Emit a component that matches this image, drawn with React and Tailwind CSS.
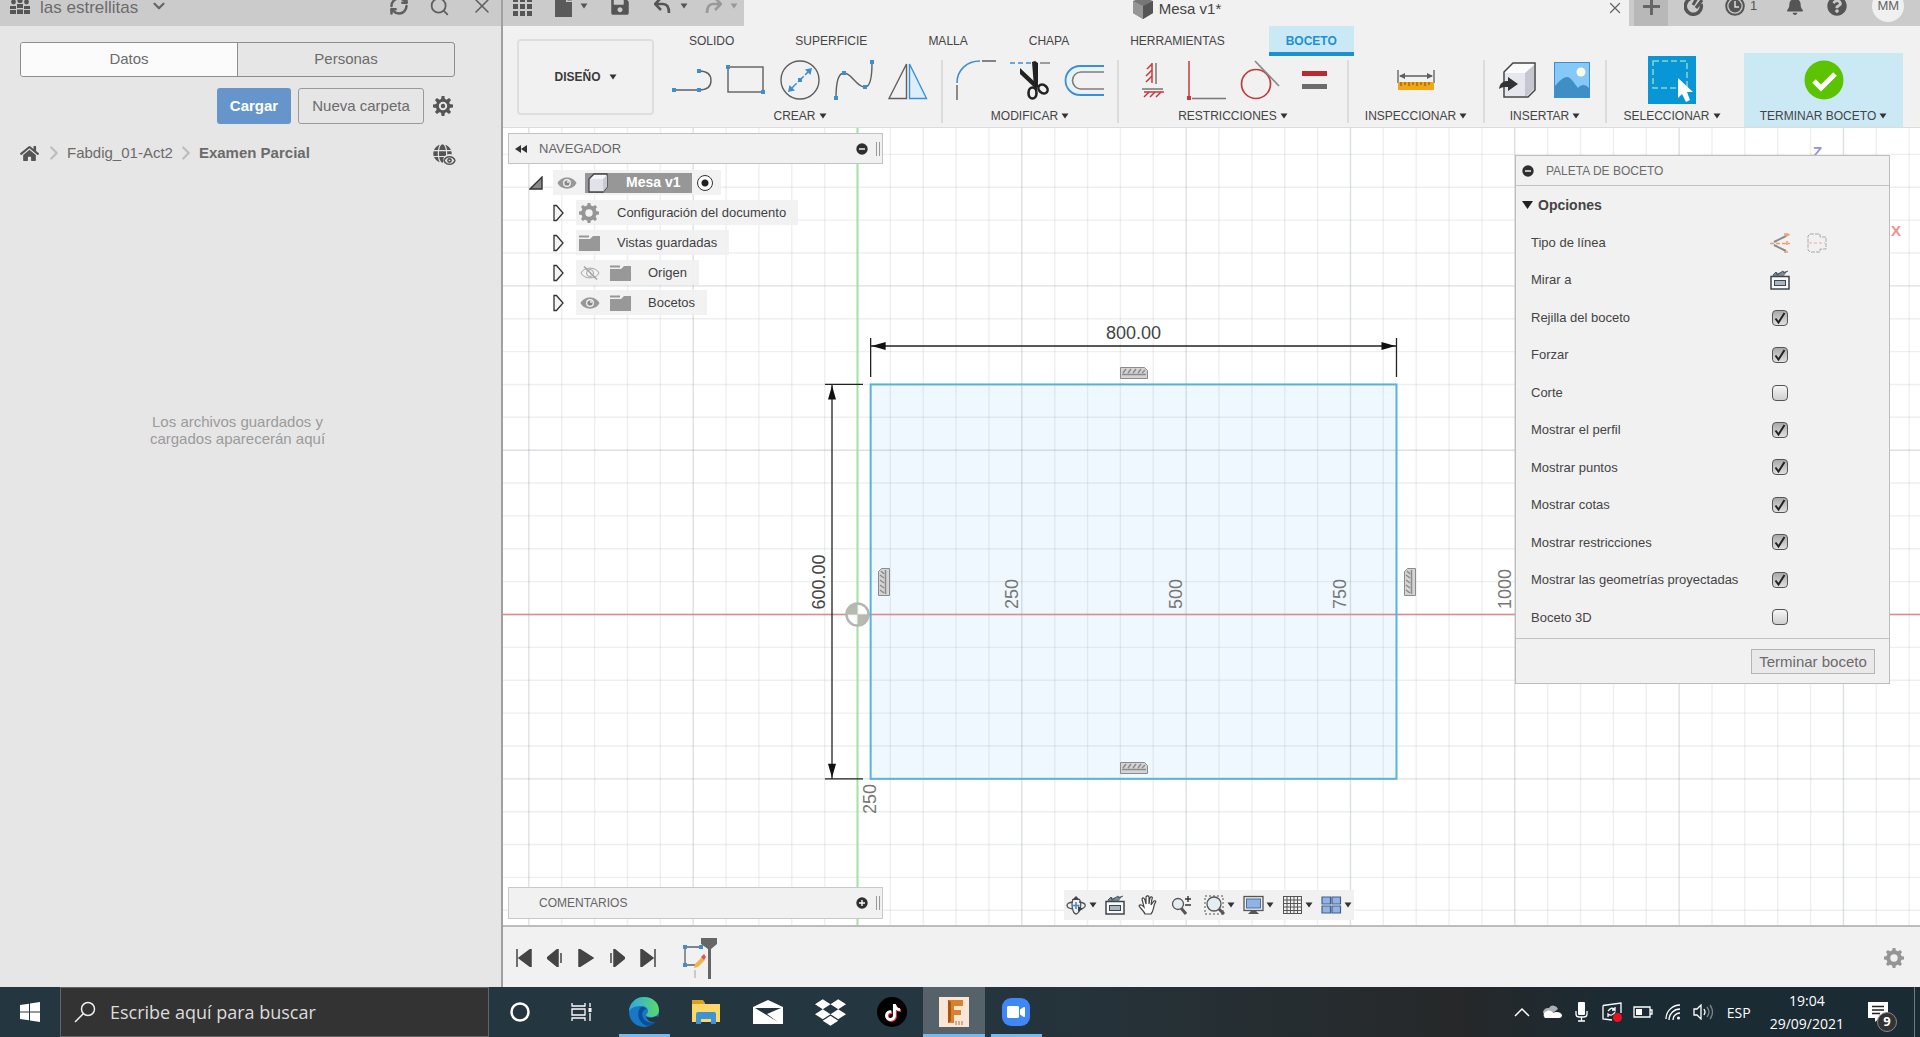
import { useState } from 'react';
import {
  FaHome,
  FaGlobe,
  FaSave,
  FaBell,
  FaQuestionCircle,
  FaDropbox,
  FaTiktok,
  FaVideo,
} from 'react-icons/fa';
import { RefreshCw, Search, X, ChevronDown, ChevronRight, Eye } from 'lucide-react';

const BLUE = '#3d8fd1';
const INK = '#5f5f5f';
const RED = '#c8373b';

// ---------- small shared pieces ----------

function Svg({ w, h, children, ...rest }) {
  return (
    <svg width={w} height={h} viewBox={`0 0 ${w} ${h}`} fill="none" aria-hidden="true" {...rest}>
      {children}
    </svg>
  );
}

function Caret({ color = '#333' }) {
  return (
    <Svg w={8} h={6} className="shrink-0">
      <path d="M0.5 0.5h7L4 5.5z" fill={color} />
    </Svg>
  );
}

function Dots({ points }) {
  return points.map(([x, y]) => (
    <rect key={`${x}-${y}`} x={x - 2} y={y - 2} width="4" height="4" fill={BLUE} />
  ));
}

function FilledEye() {
  return (
    <Svg w={20} h={14}>
      <path d="M0.5 7C4-0.5 16-0.5 19.5 7 16 14.5 4 14.5 0.5 7z" fill="#989898" />
      <circle cx="10" cy="7" r="4" fill="#eee" />
      <circle cx="10" cy="7" r="2.6" fill="#888" />
      <circle cx="11" cy="6" r="1" fill="#eee" />
    </Svg>
  );
}

function HiddenEye() {
  return (
    <Svg w={20} h={14} stroke="#a5a5a5">
      <path d="M1 7C4 0.5 16 0.5 19 7 16 13.5 4 13.5 1 7z" />
      <circle cx="10" cy="7" r="3.5" />
      <path d="M4 0.5l13 13" strokeWidth="1.6" />
    </Svg>
  );
}

function Gear({ color = '#959595', dot }) {
  const teeth = [0, 45, 90, 135, 180, 225, 270, 315];
  return (
    <Svg w={20} h={20}>
      <circle cx="10" cy="10" r="5.7" stroke={color} strokeWidth={dot ? 3 : 4} />
      {teeth.map((a) => (
        <path key={a} d="M8 4l0.600-4h2.800l0.600 4z" fill={color} transform={`rotate(${a} 10 10)`} />
      ))}
      {dot && <circle cx="10" cy="10" r="2.2" fill={color} />}
    </Svg>
  );
}

function Folder() {
  return (
    <Svg w={21} h={16}>
      <path d="M0 4h11l3-3h7v15H0z" fill="#989898" />
      <path d="M0 1.5h10" stroke="#989898" strokeWidth="2" />
    </Svg>
  );
}

function Cube() {
  return (
    <Svg w={20} h={20}>
      <path d="M1 6l5-5h13v13l-4 5H1z" fill="#f6f6f8" stroke="#444" strokeWidth="1.3" />
      <path d="M15 6l4-4v12l-4 5z" fill="#c9cad2" />
      <path d="M2 6h13v12H2z" fill="#e2e3ea" />
    </Svg>
  );
}

function LookAt() {
  return (
    <Svg w={21} h={20}>
      <path d="M2 6l4-4 2 1 9-2-3 5z" fill="#7d8790" />
      <path d="M3 5l3-3 1 3 6-4 1 2 4-2" stroke="#44505a" />
      <rect x="1" y="6.5" width="18" height="12.5" fill="#fafafa" stroke="#3c464e" strokeWidth="1.5" />
      <rect x="4.5" y="10.5" width="11" height="5" fill="#a9b5c0" stroke="#3c464e" />
    </Svg>
  );
}

function RoundSign({ plus }) {
  return (
    <Svg w={12} h={12}>
      <circle cx="6" cy="6" r="5.7" fill="#2f2f2f" />
      <path d={plus ? 'M3 6h6M6 3v6' : 'M3 6h6'} stroke="#fff" strokeWidth="1.4" />
    </Svg>
  );
}

// ---------- left data panel ----------

function DataPanel() {
  const [tab, setTab] = useState('Datos');

  return (
    <aside className="w-[503px] shrink-0 border-r-2 border-[#a0a0a0] bg-[#e6e6e6] text-[#6b6b6b]">
      <div className="flex h-[26px] items-end overflow-hidden bg-[#cbcbcb]">
        <div className="flex h-10 w-full shrink-0 items-center pr-[7px] pl-[10px]">
          <Svg w={20} h={18}>
            <g fill="#555">
              <circle cx="3.5" cy="5" r="2.4" />
              <circle cx="10" cy="3.5" r="2.6" />
              <circle cx="16.5" cy="5" r="2.4" />
              <path d="M0 9h6v3H0zM7 7h6v4H7zM14 9h6v3h-6zM0 13h6v4H0zM7 12.500h6V17H7zM14 13h6v4h-6z" />
            </g>
          </Svg>
          <span className="mt-1 ml-[10px] text-[17px] leading-4">las estrellitas</span>
          <ChevronDown size={18} strokeWidth={3} className="ml-3 text-[#666]" />
          <div className="ml-auto flex items-center gap-5">
            <button aria-label="Actualizar"><RefreshCw size={20} strokeWidth={3} className="text-[#5e5e5e]" /></button>
            <button aria-label="Buscar"><Search size={21} strokeWidth={2} className="text-[#5e5e5e]" /></button>
            <button aria-label="Cerrar"><X size={24} strokeWidth={1.5} className="text-[#5e5e5e]" /></button>
          </div>
        </div>
      </div>

      <div className="pt-4 pr-[46px] pl-5">
        <div className="flex h-[35px] rounded-[3px] border border-[#8d8d8d] text-[15px]">
          {['Datos', 'Personas'].map((name) => (
            <button
              key={name}
              onClick={() => setTab(name)}
              className={tab === name ? 'flex-1 rounded-l-[2px] border-r border-[#8d8d8d] bg-[#fbfbfb]' : 'flex-1'}
            >
              {name}
            </button>
          ))}
        </div>

        <div className="mt-[11px] mr-[2px] flex items-center justify-end gap-[7px] text-[15px]">
          <button className="h-9 w-[74px] rounded-[3px] bg-[#6695cb] font-bold text-white">Cargar</button>
          <button className="h-9 w-[126px] rounded-[3px] border border-[#9a9a9a]">Nueva carpeta</button>
          <button aria-label="Configuración" className="ml-[2px]"><Gear color="#555" dot /></button>
        </div>

        <nav className="mt-[19px] mr-[3px] flex h-5 items-center text-[15px]">
          <a href="#inicio" aria-label="Inicio"><FaHome size={19} color="#555" /></a>
          <ChevronRight size={22} strokeWidth={2.5} className="ml-1 text-[#bdbdbd]" />
          <a href="#fabdig" className="ml-[2px]">Fabdig_01-Act2</a>
          <ChevronRight size={22} strokeWidth={2.5} className="ml-[2px] text-[#bdbdbd]" />
          <a href="#examen" className="ml-[2px] font-bold">Examen Parcial</a>
          <span className="relative ml-auto">
            <FaGlobe size={19} color="#555" />
            <Eye size={13} strokeWidth={3} className="absolute -right-1 -bottom-1 rounded-full bg-[#e6e6e6] text-[#555]" />
          </span>
        </nav>

        <p className="mx-auto mt-[250px] w-[180px] text-center text-[15px] leading-[17px] text-[#9b9b9b]">
          Los archivos guardados y cargados aparecerán aquí
        </p>
      </div>
    </aside>
  );
}

// ---------- title bar ----------

function TitleBar() {
  return (
    <header className="flex h-[26px] shrink-0 items-end overflow-hidden bg-[#cbcbcb] text-[#555]">
      <div className="flex h-10 w-[241px] shrink-0 items-center pl-[10px]">
        <Svg w={19} h={19}>
          {[0, 7, 14].map((y) => [0, 7, 14].map((x) => <rect key={`${x}-${y}`} x={x} y={y} width="5" height="5" fill="#555" />))}
        </Svg>
        <Svg w={17} h={21} className="ml-[23px]">
          <path d="M0 0h11v6h6v15H0z" fill="#5a5a5a" />
          <path d="M12.500 0l4.500 4.500h-4.500z" fill="#5a5a5a" />
        </Svg>
        <span className="ml-2"><Caret color="#555" /></span>
        <button aria-label="Guardar" className="ml-[22px]"><FaSave size={20} /></button>
        <Svg w={18} h={18} className="ml-6">
          <path d="M7 1L1 7l6 6M2 7h7q6 0 6 9" stroke="#555" strokeWidth="2.600" />
        </Svg>
        <span className="ml-2"><Caret color="#555" /></span>
        <Svg w={18} h={18} className="ml-4">
          <path d="M11 1l6 6-6 6M16 7H9q-6 0-6 9" stroke="#999" strokeWidth="2.600" />
        </Svg>
        <span className="ml-2"><Caret color="#999" /></span>
      </div>

      <div className="flex h-10 flex-1 items-center bg-[#f1f1f1] pr-[5px]">
        <div className="ml-1 flex flex-1 items-center justify-center gap-[6px] text-[15px] text-[#444]">
          <Svg w={20} h={22} className="mt-1">
            <path d="M10 0l10 4v12l-10 6L0 16V4z" fill="#777" />
            <path d="M0 4l10 5v13L0 16z" fill="#969696" />
            <path d="M10 9l10-5v12l-10 6z" fill="#555" />
          </Svg>
          <span className="mt-[6px] leading-4">Mesa v1*</span>
        </div>
        <button aria-label="Cerrar pestaña"><X size={18} strokeWidth={1.7} className="mt-1 text-[#666]" /></button>
      </div>

      <div className="flex h-10 w-[291px] shrink-0 items-center pl-[5px]">
        <button aria-label="Nueva pestaña" className="flex h-10 w-[34px] items-center justify-center bg-[#b8b8b8]">
          <Svg w={17} h={17}><path d="M0 8.500h17M8.500 0v17" stroke="#666" strokeWidth="3" /></Svg>
        </button>
        <Svg w={20} h={20} className="ml-4">
          <path d="M6 3a8 8 0 1 0 11 5" stroke="#555" strokeWidth="3.500" />
          <path d="M9 9l4-7M12 12l6-8" stroke="#555" strokeWidth="3" />
        </Svg>
        <Svg w={20} h={20} className="ml-[21px]">
          <circle cx="10" cy="10" r="8.800" stroke="#555" strokeWidth="2" />
          <circle cx="10" cy="10" r="6.500" fill="#555" />
          <path d="M10 5v6h4" stroke="#ddd" strokeWidth="1.500" />
        </Svg>
        <span className="ml-[5px] text-[13px] leading-3">1</span>
        <button aria-label="Notificaciones" className="ml-[29px]"><FaBell size={18} /></button>
        <button aria-label="Ayuda" className="ml-[23px]"><FaQuestionCircle size={20} /></button>
        <button aria-label="Cuenta" className="ml-[25px] flex h-8 w-8 items-center justify-center rounded-full bg-[#f0f0f0] text-[13px] leading-3 text-[#666]">MM</button>
      </div>
    </header>
  );
}

// ---------- ribbon icons, all 40px wide slots ----------

const LineIcon = () => (
  <Svg w={40} h={40}>
    <path d="M2 30h25M27 11q12 0 12 9.500T27 30" stroke={INK} strokeWidth="1.400" />
    <Dots points={[[2, 30], [27, 30], [27, 11]]} />
  </Svg>
);

const RectIcon = () => (
  <Svg w={40} h={40}>
    <rect x="2" y="7" width="35" height="25" stroke={INK} strokeWidth="1.400" />
    <Dots points={[[2, 7], [37, 32]]} />
  </Svg>
);

const CircleIcon = () => (
  <Svg w={40} h={40}>
    <circle cx="20" cy="20" r="19" stroke={INK} strokeWidth="1.400" />
    <path d="M11 29L29 11" stroke={BLUE} strokeWidth="1.500" strokeDasharray="8 2" />
    <path d="M8 32l1.500-7 5.500 5.500zM32 8l-7 1.500 5.500 5.500z" fill={BLUE} />
    <Dots points={[[20, 20]]} />
  </Svg>
);

const SplineIcon = () => (
  <Svg w={40} h={40}>
    <path d="M2 38C2 20 5 13 10 13c8 0 12 14 21 14 5 0 7-8 7-24" stroke={INK} strokeWidth="1.400" />
    <Dots points={[[2, 38], [10, 13], [31, 27], [38, 2]]} />
  </Svg>
);

const MirrorIcon = () => (
  <Svg w={40} h={40}>
    <path d="M18.500 4L1 38.500h17.500z" stroke={INK} strokeWidth="1.400" />
    <path d="M21.500 4L38.500 38.500h-17z" fill="#dceefb" stroke={BLUE} strokeWidth="1.400" />
  </Svg>
);

const FilletIcon = () => (
  <Svg w={40} h={40}>
    <path d="M1 23C1 10 11 1 24 1" stroke={BLUE} strokeWidth="1.600" />
    <path d="M1 25v15M26 1h14" stroke={INK} strokeWidth="1.400" />
  </Svg>
);

const TrimIcon = () => (
  <Svg w={40} h={40}>
    <path d="M0 3h21" stroke={BLUE} strokeWidth="1.500" strokeDasharray="5 3" />
    <path d="M30 3h10" stroke="#777" strokeWidth="1.400" />
    <path d="M22 2l3-1 3 2v24h-4z" fill="#222" />
    <path d="M10 8l17 16v6L10 14z" fill="#222" />
    <ellipse cx="22.500" cy="33" rx="4" ry="5.500" stroke="#222" strokeWidth="2.600" />
    <ellipse cx="33" cy="29" rx="4" ry="5" stroke="#222" strokeWidth="2.600" transform="rotate(-50 33 29)" />
  </Svg>
);

const OffsetIcon = () => (
  <Svg w={40} h={40}>
    <path d="M40 6H16a14.500 14.500 0 0 0 0 29h24" fill="#e4f3fd" stroke={BLUE} strokeWidth="1.800" />
    <path d="M40 12H17a8 8 0 0 0 0 17h23" fill="#f1f1f1" stroke="#8a7a70" strokeWidth="1.600" />
  </Svg>
);

const HorizontalVerticalIcon = () => (
  <Svg w={40} h={40}>
    <path d="M20 3v20" stroke={RED} strokeWidth="1.500" />
    <path d="M20 4l-5 5M20 10l-6 6M20 16l-6 6M12 32h20" stroke={RED} strokeWidth="1.500" />
    <path d="M17 32l-5 5M23 32l-5 5M29 32l-5 5" stroke={RED} strokeWidth="1.500" />
    <path d="M24 3v21M10 29h21" stroke="#777" strokeWidth="1.500" />
  </Svg>
);

const PerpendicularIcon = () => (
  <Svg w={40} h={40}>
    <path d="M3 1v35" stroke={RED} strokeWidth="1.500" />
    <path d="M6 38.500h35" stroke="#777" strokeWidth="1.500" />
    <rect x="1" y="36" width="4" height="4" fill={RED} />
  </Svg>
);

const TangentIcon = () => (
  <Svg w={40} h={40}>
    <circle cx="16" cy="24" r="14.500" stroke={RED} strokeWidth="1.700" />
    <path d="M15 1l24 25" stroke="#888" strokeWidth="1.700" />
  </Svg>
);

const EqualIcon = () => (
  <Svg w={40} h={40}>
    <rect x="8" y="11" width="25" height="5" fill="#b92b2f" />
    <rect x="8" y="24" width="25" height="5" fill="#6b6b6b" />
  </Svg>
);

const MeasureIcon = () => (
  <Svg w={40} h={40}>
    <path d="M2 10v13M38 10v13M4 16h32" stroke={INK} strokeWidth="1.300" />
    <path d="M3 16l6-3v6zM37 16l-6-3v6z" fill={INK} />
    <rect x="2" y="22" width="36" height="8" fill="#f2a516" />
    <path d="M5 22v4M9 22v3M13 22v4M17 22v3M21 22v4M25 22v3M29 22v4M33 22v3" stroke="#7a4d00" />
  </Svg>
);

const InsertIcon = () => (
  <Svg w={40} h={40}>
    <path d="M6 12L15 3h22v27l-7 7H6z" fill="#fbfbfc" stroke="#444" strokeWidth="1.500" />
    <path d="M27 13l9-8v24l-7 7h-2z" fill="#c5c6cf" />
    <path d="M7 13h20v23H7z" fill="#e6e7ee" />
    <path d="M1 29c1-7 5-8 9-8v-4l10 7-10 7v-4c-4 0-6 0-9 2z" fill="#333" />
  </Svg>
);

const ImageIcon = () => (
  <Svg w={40} h={40}>
    <rect x="2.500" y="2.500" width="35" height="35" fill="#86c9f8" stroke={BLUE} />
    <circle cx="29" cy="12" r="4.500" fill="#fbfbe0" />
    <path d="M3 26c5-6 9-9 12-9 4 0 7 6 11 11 2-3 7-5 11 0v9H3z" fill="#3f8ec6" />
  </Svg>
);

const SelectIcon = () => (
  <span className="my-[-4px] flex bg-[#0896d7]">
    <Svg w={48} h={48}>
      <rect x="5" y="5" width="34" height="27" stroke="#8fd6c9" strokeWidth="1.500" strokeDasharray="6 3" />
      <path d="M30 22v20l4-4 4 8 4-2-3-8h6z" fill="#fff" />
    </Svg>
  </span>
);

const FinishIcon = () => (
  <Svg w={40} h={40}>
    <circle cx="20" cy="20" r="19.500" fill="#5cc300" />
    <path d="M10 21l7 7 14-14" stroke="#fff" strokeWidth="5" />
  </Svg>
);

const RIBBON = [
  { name: 'CREAR', icons: [LineIcon, RectIcon, CircleIcon, SplineIcon, MirrorIcon] },
  { name: 'MODIFICAR', icons: [FilletIcon, TrimIcon, OffsetIcon] },
  { name: 'RESTRICCIONES', icons: [HorizontalVerticalIcon, PerpendicularIcon, TangentIcon, EqualIcon] },
  { name: 'INSPECCIONAR', icons: [MeasureIcon], wide: true },
  { name: 'INSERTAR', icons: [InsertIcon, ImageIcon] },
];

const TABS = ['SOLIDO', 'SUPERFICIE', 'MALLA', 'CHAPA', 'HERRAMIENTAS', 'BOCETO'];

function RibbonLabel({ children }) {
  return (
    <button className="mt-[9px] flex items-center gap-[3px] text-[12px] leading-[14px] whitespace-nowrap text-[#444]">
      {children}
      <Caret />
    </button>
  );
}

function Ribbon() {
  const [active, setActive] = useState('BOCETO');

  return (
    <div className="flex h-[102px] shrink-0 border-b border-[#dcdcdc] bg-[#f1f1f1] pr-[17px] pl-[14px]">
      <button className="mt-[13px] flex h-[76px] w-[137px] shrink-0 items-center justify-center gap-2 rounded-[4px] border-2 border-[#dedede] text-[12px] font-bold text-[#3a3a3a]">
        DISEÑO <Caret />
      </button>

      <div className="flex flex-1 flex-col pl-[18px]">
        <div className="flex h-[30px] shrink-0 gap-[27px] text-[12px]">
          {TABS.map((tab) => (
            <button
              key={tab}
              onClick={() => setActive(tab)}
              className={
                tab === active
                  ? 'border-b-4 border-[#1a92d0] bg-[#cbe9f5] px-[17px] pt-[3px] font-bold text-[#1a92d0]'
                  : 'px-[17px] text-[#444]'
              }
            >
              {tab}
            </button>
          ))}
        </div>

        <div className="flex flex-1">
          {RIBBON.map(({ name, icons, wide }) => (
            <div
              key={name}
              className={
                wide
                  ? 'mt-1 mb-1 flex w-[136px] flex-col items-center border-r-2 border-[#dcdcdc]'
                  : 'mt-1 mb-1 flex flex-col items-center border-r-2 border-[#dcdcdc] px-[13px] first:pl-0'
              }
            >
              <div className="flex gap-[14px]">
                {icons.map((Icon, i) => (
                  <button key={i} aria-label={`${name} ${i + 1}`}><Icon /></button>
                ))}
              </div>
              <RibbonLabel>{name}</RibbonLabel>
            </div>
          ))}
          <div className="mt-1 flex w-[130px] flex-col items-center">
            <button aria-label="Seleccionar objetos"><SelectIcon /></button>
            <RibbonLabel>SELECCIONAR</RibbonLabel>
          </div>
          <div className="-mt-[3px] ml-auto flex w-[159px] flex-col items-center bg-[#cbe9f5] pt-[7px]">
            <button aria-label="Terminar"><FinishIcon /></button>
            <RibbonLabel>TERMINAR BOCETO</RibbonLabel>
          </div>
        </div>
      </div>
    </div>
  );
}

// ---------- sketch canvas ----------

// drawing units are mm, one small grid square is 50 mm
const SCALE = 0.6573;
const ORIGIN = { x: 354.5, y: 486.5 };
const toX = (mm) => ORIGIN.x + mm * SCALE;
const toY = (mm) => ORIGIN.y - mm * SCALE;
const range = (from, to) => Array.from({ length: to - from + 1 }, (_, i) => from + i);

function ConstraintGlyph({ x, y, vertical }) {
  return (
    <g transform={vertical ? `translate(${x} ${y + 28}) rotate(-90)` : `translate(${x} ${y})`}>
      <path d="M0.500 0.500h24l3 3v8H0.500z" fill="#d4d4d4" stroke="#8b8b8b" />
      <path d="M2 7.500h24M3 6l3-4M8 6l3-4M13 6l3-4M18 6l3-4M22 6l3-3" stroke="#8b8b8b" strokeWidth="1.500" />
    </g>
  );
}

function Sketch() {
  const left = toX(20);
  const right = toX(820);
  const top = toY(350);
  const bottom = toY(-250);
  const midX = (left + right) / 2;
  const dimY = 218;
  const dimX = 329;

  return (
    <svg className="absolute inset-0 h-full w-full" fontFamily="Liberation Sans, Arial, sans-serif" fontSize="18">
      <rect x={left} y={top} width={right - left} height={bottom - top} fill="#eff8ff" />
      {range(-11, 55).map((n) => (
        <line key={`v${n}`} x1={toX(n * 50)} x2={toX(n * 50)} y1="0" y2="100%" stroke={n % 5 === 0 ? '#88909848' : '#88909824'} strokeWidth="1.4" />
      ))}
      {range(-16, 16).map((n) => (
        <line key={`h${n}`} y1={toY(n * 50)} y2={toY(n * 50)} x1="0" x2="100%" stroke={n % 5 === 0 ? '#88909848' : '#88909824'} strokeWidth="1.4" />
      ))}

      {/* axes */}
      <line x1={ORIGIN.x} x2={ORIGIN.x} y1="0" y2="100%" stroke="#a4e3a4" strokeWidth="2" />
      <line x1="0" x2="100%" y1={ORIGIN.y} y2={ORIGIN.y} stroke="#e08a90" strokeWidth="1.6" />
      <circle cx={ORIGIN.x} cy={ORIGIN.y} r="11" fill="#ffffffb0" stroke="#b5b5b5" strokeWidth="2.500" />
      <path
        d={`M${ORIGIN.x} ${ORIGIN.y}v-11a11 11 0 0 0 -11 11zM${ORIGIN.x} ${ORIGIN.y}v11a11 11 0 0 0 11 -11z`}
        fill="#b5b9b0"
      />

      {/* profile */}
      <rect x={left} y={top} width={right - left} height={bottom - top} fill="none" stroke="#58b4d6" strokeWidth="2" />

      {/* dimensions */}
      <g stroke="#222" strokeWidth="1.300" fill="#111">
        <path d={`M${left} 210V249M${right} 210V249M${left} ${dimY}H${right}`} />
        <path stroke="none" d={`M${left + 1} ${dimY}l14-4v8zM${right - 1} ${dimY}l-14-4v8z`} />
        <path d={`M322 ${top}H360M322 ${bottom}H360M${dimX} ${top}V${bottom}`} />
        <path stroke="none" d={`M${dimX} ${top + 1}l-4 14h8zM${dimX} ${bottom - 1}l-4-14h8z`} />
      </g>
      <text x={midX} y="211" textAnchor="middle" fill="#444">800.00</text>
      <text transform="translate(322 454) rotate(-90)" textAnchor="middle" fill="#444">600.00</text>

      {/* ruler numbers along the axes */}
      {[250, 500, 750, 1000].map((mm) => (
        <text key={mm} transform={`translate(${toX(mm) - 4} 481) rotate(-90)`} fill="#777">{mm}</text>
      ))}
      <text transform="translate(373 686) rotate(-90)" fill="#777">250</text>

      <ConstraintGlyph x={617} y={239} />
      <ConstraintGlyph x={617} y={634} />
      <ConstraintGlyph x={375} y={440} vertical />
      <ConstraintGlyph x={901} y={440} vertical />

      <text x="1310" y="29" fontSize="15" fontWeight="bold" fill="#9a8fe0">Z</text>
      <text x="1388" y="108" fontSize="15" fontWeight="bold" fill="#f0908f">X</text>
    </svg>
  );
}

function Chip({ children }) {
  return <div className="flex h-[25px] items-center bg-[#f1f1f1e6]">{children}</div>;
}

function Expander() {
  return (
    <button aria-label="Expandir" className="mr-3">
      <Svg w={11} h={18}>
        <path d="M1 1.500h2.500L10 9l-6.500 7.500H1z" fill="#f5f5f5" stroke="#333" strokeWidth="1.300" />
      </Svg>
    </button>
  );
}

const TREE = [
  { label: 'Configuración del documento', icon: Gear },
  { label: 'Vistas guardadas', icon: Folder },
  { label: 'Origen', icon: Folder, eye: HiddenEye },
  { label: 'Bocetos', icon: Folder, eye: FilledEye },
];

function Navigator() {
  return (
    <div className="absolute top-[5px] left-[5px] w-[375px] text-[13px] text-[#3f3f3f]">
      <div className="flex h-[31px] items-center border border-[#c2c2c2] bg-[#f1f1f1] pr-[2px] pl-[6px]">
        <button aria-label="Contraer">
          <Svg w={12} h={8}><path d="M6 0v8L0 4zM12 0v8L6 4z" fill="#333" /></Svg>
        </button>
        <span className="ml-3 text-[#666]">NAVEGADOR</span>
        <button className="ml-auto" aria-label="Minimizar"><RoundSign /></button>
        <span className="ml-2 h-[14px] w-1 border-x border-[#999]" />
      </div>

      <ul className="mt-[6px] flex flex-col gap-[5px]">
        <li className="flex items-center pl-[21px]">
          <Svg w={14} h={14} className="mr-[10px]">
            <path d="M13 1v12H1z" fill="#8a8a8a" stroke="#333" strokeWidth="1.400" />
          </Svg>
          <Chip>
            <span className="ml-1"><FilledEye /></span>
            <span className="ml-2 flex h-5 w-[107px] items-center bg-[#979797] pl-[3px] text-[14px] font-bold text-white">
              <Cube />
              <span className="ml-[18px]">Mesa v1</span>
            </span>
            <label className="mr-2 ml-[5px] flex">
              <span className="sr-only">Activar Mesa v1</span>
              <input type="radio" name="activo" defaultChecked className="h-4 w-4 appearance-none rounded-full border border-[#333] bg-[radial-gradient(circle,#222_3px,#fff_4px)]" />
            </label>
          </Chip>
        </li>
        {TREE.map(({ label, icon: Icon, eye: EyeIcon }) => (
          <li key={label} className="flex items-center pl-[45px]">
            <Expander />
            <Chip>
              {EyeIcon && <span className="ml-1"><EyeIcon /></span>}
              <span className={EyeIcon ? 'ml-[10px] w-[21px]' : 'ml-[3px] w-[21px]'}><Icon /></span>
              <span className="mr-3 ml-[17px]">{label}</span>
            </Chip>
          </li>
        ))}
      </ul>
    </div>
  );
}

const OPTIONS = [
  ['Rejilla del boceto', true],
  ['Forzar', true],
  ['Corte', false],
  ['Mostrar el perfil', true],
  ['Mostrar puntos', true],
  ['Mostrar cotas', true],
  ['Mostrar restricciones', true],
  ['Mostrar las geometrías proyectadas', true],
  ['Boceto 3D', false],
];

function CheckRow({ label, initial }) {
  const [checked, setChecked] = useState(initial);
  return (
    <label className="flex items-center">
      <span className="w-[241px]">{label}</span>
      <span className="grid">
        <input
          type="checkbox"
          checked={checked}
          onChange={(e) => setChecked(e.target.checked)}
          className="col-start-1 row-start-1 h-4 w-4 appearance-none rounded-[4px] border border-[#555] bg-linear-to-b from-[#f6f6f6] to-[#cfcfcf] checked:from-[#a9a9a9] checked:to-[#e0e0e0]"
        />
        {checked && (
          <Svg w={16} h={16} className="pointer-events-none col-start-1 row-start-1">
            <path d="M3.500 8.500l3 4L12.500 3" stroke="#222" strokeWidth="2" />
          </Svg>
        )}
      </span>
    </label>
  );
}

function SketchPalette() {
  return (
    <section className="absolute top-[27px] right-[30px] w-[375px] border border-[#bdbdbd] bg-[#f1f1f1] text-[13px] text-[#444]">
      <div className="flex h-[30px] items-center border-b border-[#c2c2c2] pl-[6px]">
        <button aria-label="Minimizar"><RoundSign /></button>
        <h2 className="ml-3 text-[12px] text-[#6b6b6b]">PALETA DE BOCETO</h2>
      </div>
      <button className="flex h-[38px] items-center gap-[5px] pl-[6px] text-[14px] font-bold">
        <Svg w={11} h={8}><path d="M0 0h11L5.500 8z" fill="#222" /></Svg>
        Opciones
      </button>
      <div className="grid h-[412px] auto-rows-fr pl-[15px]">
        <div className="flex items-center">
          <span className="w-[239px]">Tipo de línea</span>
          <button aria-label="Construcción">
            <Svg w={20} h={20}>
              <path d="M4 9L16 3M4 12l12 6" stroke="#8a8a8a" strokeWidth="2" />
              <path d="M0 10.500h20M14 1h5M16 3l4-2M14 19l5 0M17 8v5" stroke="#ee9a6a" strokeDasharray="4 2" strokeWidth="1.500" />
            </Svg>
          </button>
          <button aria-label="Línea de centro" className="ml-[17px]">
            <Svg w={20} h={20} stroke="#aaa">
              <path d="M3 1h10v3h6v12h-6v3H3l-2-2V3z" strokeDasharray="4 1" />
              <path d="M2 10h16" stroke="#e8b294" strokeDasharray="3 2" />
            </Svg>
          </button>
        </div>
        <div className="flex items-center">
          <span className="w-[239px]">Mirar a</span>
          <button aria-label="Mirar a"><LookAt /></button>
        </div>
        {OPTIONS.map(([label, initial]) => <CheckRow key={label} label={label} initial={initial} />)}
      </div>
      <div className="mt-[2px] flex h-[45px] items-center justify-end border-t border-[#c2c2c2] pr-[14px]">
        <button className="h-[25px] w-[124px] border border-[#b5b5b5] bg-[#e9e9e9] text-[15px] leading-none text-[#6b6b6b]">Terminar boceto</button>
      </div>
    </section>
  );
}

function Lens({ extra }) {
  return (
    <Svg w={21} h={20}>
      {extra === 'fit' && <rect x="1" y="1" width="18" height="18" stroke="#555" strokeDasharray="2 2" />}
      <path d={extra === 'fit' ? 'M14 13l6 6' : 'M10 13l5 6'} stroke="#555" strokeWidth="3" />
      <circle cx={extra === 'fit' ? 10 : 7} cy="9" r={extra === 'fit' ? 7 : 5.5} fill="#e3edf2" stroke="#555" strokeWidth="1.300" />
      {extra === 'zoom' && <path d="M14 4h6M17 1v6M14 10h6" stroke="#333" strokeWidth="1.400" />}
    </Svg>
  );
}

const VIEW_TOOLS = [
  {
    name: 'Órbita',
    menu: true,
    icon: (
      <Svg w={21} h={20}>
        <path d="M7 14c-8-1-8-6 0-7M13 7c8 1 8 5 2 7" stroke="#555" strokeWidth="1.300" />
        <path d="M13 4c3 3 2 14-3 15-4-1-5-11-3-15" stroke="#555" strokeWidth="1.300" />
        <path d="M6 5l4-4 4 4zM12 11l5 3-5 3z" fill="#444" />
        <path d="M10 7v7M6.500 10.500h7" stroke={BLUE} strokeWidth="1.600" />
      </Svg>
    ),
  },
  { name: 'Mirar a', icon: <LookAt /> },
  {
    name: 'Encuadre',
    icon: (
      <Svg w={21} h={20}>
        <path d="M7 19c-1-3-4-5-6-8 1-2 3-1 5 1L4 4c1-2 2-1 3 1l1 4V2c1-2 3-1 3 0v7l1-6c1-2 3-1 2 1l-1 6 3-4c2-1 2 1 1 2-2 4-1 8-4 11z" fill="#fff" stroke="#444" strokeWidth="1.200" />
      </Svg>
    ),
  },
  { name: 'Zoom', icon: <Lens extra="zoom" /> },
  { name: 'Ajustar', menu: true, icon: <Lens extra="fit" /> },
  {
    name: 'Visualización',
    menu: true,
    icon: (
      <Svg w={21} h={20}>
        <rect x="1" y="1.500" width="19" height="14" fill="#eee" stroke="#555" strokeWidth="1.300" />
        <rect x="3.500" y="4" width="14" height="9" fill="#8fb4e3" stroke="#4a6ea0" />
        <path d="M5 19h11l-3-3H8z" fill="#555" />
      </Svg>
    ),
  },
  {
    name: 'Rejilla',
    menu: true,
    icon: (
      <Svg w={21} h={20}>
        <path d="M1 1.500h19M1 5h19M1 8.500h19M1 12h19M1 15.500h19M1 18.500h19M1.500 1v18M5 1v18M8.500 1v18M12 1v18M15.500 1v18M19.500 1v18" stroke="#555" />
      </Svg>
    ),
  },
  {
    name: 'Ventanas',
    menu: true,
    icon: (
      <Svg w={21} h={20} fill="#8fb4e3" stroke="#44608a" strokeWidth="1.200">
        <path d="M1 2h8.500v7H1zM11 2h8.500v7H11zM1 11h8.500v7H1zM11 11h8.500v7H11z" />
      </Svg>
    ),
  },
];

function ViewBar() {
  return (
    <div className="absolute bottom-[5px] left-[561px] flex h-[30px] items-center gap-2 bg-[#f1f1f1] px-[2px]">
      {VIEW_TOOLS.map(({ name, menu, icon }) => (
        <button key={name} aria-label={name} className={menu ? 'flex items-center gap-[2px]' : 'pr-1'}>
          {icon}
          {menu && <Caret />}
        </button>
      ))}
    </div>
  );
}

function Comments() {
  return (
    <div className="absolute bottom-[6px] left-[5px] flex h-8 w-[375px] items-center border border-[#c9c9c9] bg-[#f1f1f1] pr-[2px] pl-[30px] text-[12px] text-[#666]">
      COMENTARIOS
      <button className="ml-auto" aria-label="Ampliar"><RoundSign plus /></button>
      <span className="ml-2 h-[14px] w-1 border-x border-[#999]" />
    </div>
  );
}

// ---------- timeline ----------

const PLAYBACK = [
  ['Inicio', 'M1 0v18M15 0v18L3 9z'],
  ['Anterior', 'M11 0v18L0 9zM14 4v10'],
  ['Reproducir', 'M1 0v18L15 9z'],
  ['Siguiente', 'M5 0v18L16 9zM2 4v10'],
  ['Final', 'M1 0v18L13 9zM15 0v18'],
];

function Timeline() {
  return (
    <div className="flex h-[62px] shrink-0 items-center border-t-2 border-[#bcbcbc] bg-[#f1f1f1] pt-[2px] pr-4 pl-[13px]">
      <div className="flex gap-[15px]">
        {PLAYBACK.map(([name, d]) => (
          <button key={name} aria-label={name}>
            <Svg w={16} h={18}><path d={d} fill="#444" stroke="#444" strokeWidth="1.500" /></Svg>
          </button>
        ))}
      </div>
      <Svg w={36} h={42} className="ml-[26px]">
        <path d="M3 10h17M3 10v18M3 28h10" stroke={INK} strokeWidth="1.300" />
        <path d="M20 20l3 3-7 7-4 1 1-4z" fill="#f3b34c" />
        <path d="M19 20l3-3 2 3-2 3z" fill="#e0564e" />
        <Dots points={[[3, 10], [19, 10], [3, 28]]} />
        <path d="M13 33v8" stroke="#bbb" strokeWidth="1.500" />
        <path d="M19 1h16v6l-6 5v30h-3V12l-7-5z" fill="#666" />
      </Svg>
      <button className="ml-auto" aria-label="Preferencias"><Gear /></button>
    </div>
  );
}

// ---------- windows taskbar ----------

const EdgeIcon = () => (
  <Svg w={30} h={30}>
    <defs>
      <linearGradient id="edgeTop" x1="0" x2="1">
        <stop offset="0" stopColor="#2fa8e0" />
        <stop offset="1" stopColor="#5bd96a" />
      </linearGradient>
    </defs>
    <circle cx="15" cy="15" r="15" fill="#1878c8" />
    <path d="M0 15C0 6 7 0 15 0c9 0 15 6 15 13 0 5-4 7-8 7-3 0-5-1-5-2 0-1 2-1 2-4 0-3-3-5-7-5C6 9 1 11 0 15z" fill="url(#edgeTop)" />
    <path d="M12 10c-4 4-4 12 2 17 4 3 9 2 13-2-3 1-7 1-10-1-4-3-5-8-2-11 1-1 2-1 3 0-1-3-4-4-6-3z" fill="#0d4f96" />
    <path d="M17 18c0 3 5 4 11 1l2 3-3 3c-4 1-10-1-10-7z" fill="#25363e" />
  </Svg>
);

const APPS = [
  { name: 'Cortana', icon: <Svg w={22} h={22}><circle cx="11" cy="11" r="8.500" stroke="#fff" strokeWidth="2.500" /></Svg> },
  {
    name: 'Vista de tareas',
    icon: (
      <Svg w={22} h={20} stroke="#fff" strokeWidth="1.300">
        <path d="M1 1v3h13V1M1 19v-3h13v3M1 7h13v6H1zM19 1v4M19 11v8" />
        <path d="M19 6v4" strokeWidth="3" />
      </Svg>
    ),
  },
  { name: 'Edge', open: true, icon: <EdgeIcon /> },
  {
    name: 'Explorador',
    icon: (
      <Svg w={28} h={24}>
        <path d="M0 0h11l2 3v5H0z" fill="#dca11f" />
        <path d="M0 4h28v18H0z" fill="#fbd868" />
        <path d="M4 24V14q0-2 2-2h16q2 0 2 2v10h-5v-5h-10v5z" fill="#3e93d4" />
      </Svg>
    ),
  },
  {
    name: 'Correo',
    icon: (
      <Svg w={30} h={24}>
        <path d="M0 7L15 0l15 7v17H0z" fill="#fff" />
        <path d="M2 8h26L14 14l11 8z" fill="#24343c" />
      </Svg>
    ),
  },
  { name: 'Dropbox', icon: <FaDropbox size={31} color="#fff" /> },
  {
    name: 'TikTok',
    icon: <span className="flex h-[30px] w-[30px] items-center justify-center rounded-full bg-black"><FaTiktok size={17} color="#fff" className="drop-shadow-[1px_1px_0_#fe2c55]" /></span>,
  },
  {
    name: 'Fusion 360',
    open: true,
    active: true,
    icon: (
      <Svg w={30} h={30}>
        <rect width="30" height="30" fill="#fbe6d6" />
        <path d="M9 3h15v6H15v4h7v5h-7v8H9z" fill="#d9822b" />
        <path d="M9 3l3 2v19l-3 2z" fill="#a9560f" />
        <path d="M17 24v4M20 24v4M23 24v4" stroke="#c89a78" strokeWidth="1.500" />
      </Svg>
    ),
  },
  {
    name: 'Zoom',
    open: true,
    icon: <span className="flex h-7 w-7 items-center justify-center rounded-[9px] bg-[#3f86f7]"><FaVideo size={18} color="#fff" /></span>,
  },
];

function Tray() {
  return (
    <div className="ml-auto flex h-full items-center pr-[5px] text-[14px] text-white">
      <Svg w={16} h={10}><path d="M1 9l7-7 7 7" stroke="#fff" strokeWidth="1.500" /></Svg>
      <Svg w={20} h={14} className="ml-3">
        <path d="M1 8a5 5 0 0 1 6-5 5 5 0 0 1 9 1l-9 7z" fill="#a9b0b4" />
        <path d="M3 13a4 4 0 0 1 2-7c2-1 5 0 6 2 3-2 8-1 9 2 0 2-1 3-3 3z" fill="#fff" />
      </Svg>
      <Svg w={13} h={20} className="ml-[13px]">
        <rect x="3" y="0" width="7" height="13" rx="1" fill="#fff" />
        <path d="M1 9v3q0 3 3 3h5q3 0 3-3V9M6.500 15v4M3 19h7" stroke="#fff" strokeWidth="1.300" />
      </Svg>
      <Svg w={20} h={20} className="ml-[14px]">
        <path d="M1 3.500L19 1v10M1 3.500V17l9 1" stroke="#fff" strokeWidth="1.300" />
        <path d="M6 9q4-5 7-1V5M13 8h-3M13 10q-3 5-7 2v3" stroke="#fff" strokeWidth="1.300" />
        <circle cx="15.500" cy="15.500" r="4.500" fill="#e81224" />
      </Svg>
      <Svg w={20} h={12} className="ml-[11px]">
        <path d="M1 1h16v10H1zM17 4h2v4h-2" stroke="#fff" strokeWidth="1.300" />
        <rect x="3" y="3" width="6" height="6" fill="#fff" />
      </Svg>
      <Svg w={16} h={16} className="ml-3" stroke="#fff" strokeWidth="1.300">
        <path d="M1 15A14 14 0 0 1 15 1M4 16A11 11 0 0 1 15 5M8 16a7 7 0 0 1 7-7" />
        <circle cx="13.500" cy="14" r="1.500" fill="#fff" stroke="none" />
      </Svg>
      <Svg w={20} h={16} className="ml-3">
        <path d="M1 5h3l4-4v14l-4-4H1z" stroke="#fff" strokeWidth="1.300" />
        <path d="M11 5q2 3 0 6" stroke="#fff" strokeWidth="1.300" />
        <path d="M14 3q4 5 0 10M17 1q5 7 0 14" stroke="#7b868c" strokeWidth="1.300" />
      </Svg>
      <span className="ml-[14px]">ESP</span>
      <div className="ml-[19px] flex flex-col text-center leading-[23px]">
        <span>19:04</span>
        <span>29/09/2021</span>
      </div>
      <button aria-label="Notificaciones" className="relative ml-6">
        <Svg w={20} h={20}>
          <path d="M0 0h20v16h-8l-5 4v-4H0z" fill="#fff" />
          <path d="M4 4.500h12M4 8h12M4 11.500h8" stroke="#222" strokeWidth="1.500" />
        </Svg>
        <span className="absolute top-[10px] left-[9px] flex h-5 w-5 items-center justify-center rounded-full border border-[#8a8a8a] bg-[#333] text-[13px] font-bold">9</span>
      </button>
      <span className="ml-[26px] h-full w-px bg-[#6f7a80]" />
    </div>
  );
}

function Taskbar() {
  return (
    <footer className="flex h-[50px] shrink-0 items-center bg-linear-to-r from-[#24363f] from-50% via-[#262829] via-76% to-[#1b2b34] to-84% font-['Open_Sans',sans-serif]">
      <button aria-label="Inicio" className="flex h-full w-[60px] items-center justify-center">
        <Svg w={20} h={20}>
          <path d="M0 3l9-1.300V9.500H0zM10 1.500L20 0v9.500H10zM0 10.500h9v7.800L0 17zM10 10.500h10V20l-10-1.500z" fill="#fff" />
        </Svg>
      </button>
      <label className="flex h-full w-[429px] items-center border border-[#646464] bg-[#333] pl-[13px]">
        <Svg w={22} h={22}>
          <circle cx="14" cy="8" r="6.500" stroke="#eee" strokeWidth="1.500" />
          <path d="M9.500 12.500L1 21" stroke="#eee" strokeWidth="1.500" />
        </Svg>
        <span className="sr-only">Buscar</span>
        <input type="text" placeholder="Escribe aquí para buscar" className="ml-[14px] flex-1 bg-transparent text-[18px] outline-none placeholder:text-[#dcdcdc]" />
      </label>
      {APPS.map(({ name, icon, open, active }) => (
        <button
          key={name}
          aria-label={name}
          className={active ? 'flex h-full w-[62px] flex-col items-center bg-[#55626a]' : 'flex h-full w-[62px] flex-col items-center'}
        >
          <span className="flex flex-1 items-center pt-[3px]">{icon}</span>
          <span className={open ? (active ? 'h-[3px] w-full bg-[#76b9ed]' : 'h-[3px] w-[51px] bg-[#76b9ed]') : 'h-[3px]'} />
        </button>
      ))}
      <Tray />
    </footer>
  );
}

export default function App() {
  return (
    <div className="flex h-screen flex-col overflow-hidden bg-white font-['Liberation_Sans',Arial,sans-serif]">
      <div className="flex min-h-0 flex-1">
        <DataPanel />
        <main className="flex min-w-0 flex-1 flex-col">
          <TitleBar />
          <Ribbon />
          <div className="relative flex-1 overflow-hidden bg-white">
            <Sketch />
            <Navigator />
            <SketchPalette />
            <Comments />
            <ViewBar />
          </div>
          <Timeline />
        </main>
      </div>
      <Taskbar />
    </div>
  );
}
